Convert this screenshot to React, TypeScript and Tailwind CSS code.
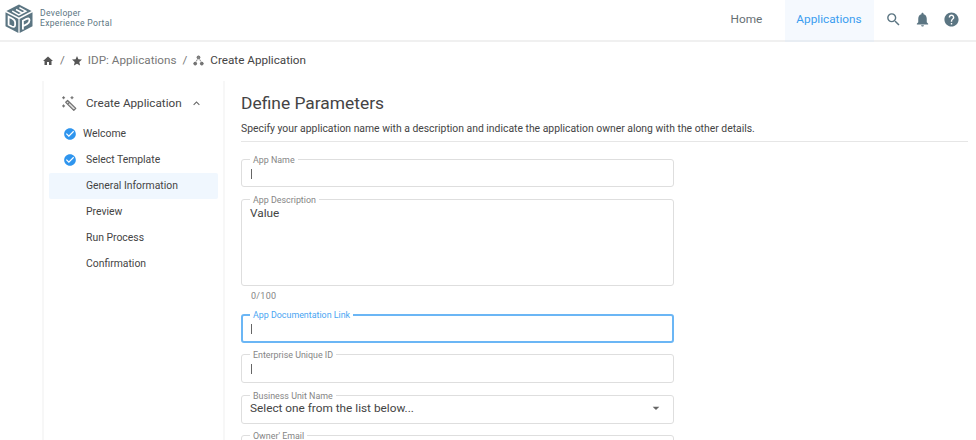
import React from "react";
import { MdHome, MdStar, MdSearch, MdNotifications, MdHelp, MdCheckCircle, MdExpandLess, MdArrowDropDown } from "react-icons/md";

function Logo() {
  return (
    <svg width="28" height="30" viewBox="0 0 28 30" className="shrink-0">
      <g fill="#5b7582">
        <path d="M14 .4 26.6 6.9 14 13.6 1.4 6.9Z" />
        <path d="M.5 8.3 13.4 15v13.9L.5 22.2Z" />
        <path d="M27.5 8.3 14.6 15v13.9l12.9-6.7Z" />
      </g>
      <g fill="none" stroke="#fff" strokeWidth="1.5">
        <path d="M7.2 7.2 13.8 10.8 20.8 7.2 14.4 3.6M17.3 9 11 5.5" />
        <path d="M3.6 12.7v8.1l3.2 1.7q3.3 1.3 3.3-1.7v-2.3q0-2.5-3-4Z" strokeWidth="1.8" />
        <path d="M17.9 25.4v-8.6l3.6-1.9q3-1.2 3 1.4 0 2.5-2.5 3.8l-4.1 2.1" strokeWidth="1.8" />
      </g>
    </svg>
  );
}

function Wand() {
  return (
    <svg width="17" height="17" viewBox="0 0 17 17" fill="#666">
      <path d="m6.6 5.5 8.2 7.9-2 2-8.1-8.1Z" fill="#ddd" stroke="#707070" strokeWidth="1.2" strokeLinejoin="round" />
      <path d="m6.8 9 1.9-1.9" stroke="#707070" strokeWidth="1.2" />
      <path d="m2.6 1.2.5 1 1 .5-1 .5-.5 1-.5-1-1-.5 1-.5ZM11 1.2l.5 1 1 .5-1 .5-.5 1-.5-1-1-.5 1-.5ZM2.6 9.4l.5 1 1 .5-1 .5-.5 1-.5-1-1-.5 1-.5Z" stroke="#666" strokeWidth=".4" />
    </svg>
  );
}

function Nodes() {
  return (
    <svg width="11" height="11" viewBox="0 0 11 11" fill="#666" stroke="#666">
      <circle cx="5.5" cy="2.4" r="1.4" fill="#888" />
      <circle cx="2.2" cy="8.6" r="1.4" fill="#777" />
      <circle cx="8.8" cy="8.6" r="1.4" fill="#777" />
      <path d="M4.3 4.4 3.3 6.4M6.7 4.4l1 2" strokeWidth=".8" />
    </svg>
  );
}

type FieldProps = { label: string; box: string; focused?: boolean; children?: React.ReactNode };

function Field({ label, box, focused, children }: FieldProps) {
  return (
    <fieldset className={`w-[433px] min-w-0 rounded-[3px] ${box} ${focused ? "border-2 border-[#6bb6f5] px-[7px]" : "border border-[#dedede] px-[8px]"}`}>
      <legend className={`h-[11px] px-[3px] text-[8.9px] leading-[12px] ${focused ? "text-[#4aa5f2]" : "text-[#858585]"}`}>{label}</legend>
      {children}
    </fieldset>
  );
}

const Caret = () => <div className="ml-[1px] mt-[4px] h-[10px] w-px bg-[#666]" />;

const steps = [
  { name: "Welcome", done: true, pad: "pl-[6px]" },
  { name: "Select Template", done: true, pad: "pl-[9px]" },
  { name: "General Information", active: true, pad: "pl-[9px]" },
  { name: "Preview", pad: "pl-[9px]" },
  { name: "Run Process", pad: "pl-[9px]" },
  { name: "Confirmation", pad: "pl-[9px]" },
];

export default function App() {
  return (
    <div className="h-[440px] w-[976px] overflow-hidden bg-white font-['Roboto',sans-serif] text-[#444]">
      <header className="flex h-[42px] border-b-2 border-[#f0f0f0] pl-[5px] text-[#5b7582]">
        <div className="flex flex-1 pt-[4px]">
          <Logo />
          <div className="pl-[7px] pt-[4px] text-[8.6px] leading-[10px] tracking-[0.3px]">
            Developer<br />Experience Portal
          </div>
        </div>
        <nav className="flex text-[11.8px] leading-[39px]">
          <a className="w-[55px] pl-px text-[#666f74]">Home</a>
          <a className="-mb-[2px] w-[89px] border-b-2 border-[#e8edf3] bg-[#f5f9fe] text-center text-[#3a9df0]">Applications</a>
        </nav>
        <div className="flex items-center gap-[12px] pb-px pl-[11px] pr-[16.5px]">
          <MdSearch size={17} />
          <MdNotifications size={17} />
          <MdHelp size={17} />
        </div>
      </header>

      <div className="flex h-[39px] items-center pb-[2px] pl-[42px] text-[11.7px] text-[#777]">
        <MdHome size={12} className="text-[#555]" />
        <span className="pl-[6px]">/</span>
        <MdStar size={12} className="ml-[6px] text-[#555]" />
        <span className="pl-[5px]">IDP: Applications</span>
        <span className="pl-[6px] pr-[6px]">/</span>
        <Nodes />
        <span className="pl-[6px] text-[#444]">Create Application</span>
      </div>

      <main className="flex">
        <aside className="ml-[42px] h-[360px] w-[183px] shrink-0 border-x-2 border-[#f7f7f7] px-[5px]">
          <div className="flex h-[40px] items-center pl-[12px] pt-[5px]">
            <Wand />
            <span className="pl-[8px] text-[11.7px]">Create Application</span>
            <MdExpandLess size={13} className="ml-[8px] text-[#666]" />
          </div>
          <ul className="text-[10.4px]">
            {steps.map((s) => (
              <li key={s.name} className={`flex h-[26px] items-center rounded-[2px] pl-[14px] ${s.active ? "bg-[#f0f7fe]" : ""}`}>
                <span className="w-[14px]">{s.done && <MdCheckCircle size={14} className="text-[#2f95ee]" />}</span>
                <span className={s.pad}>{s.name}</span>
              </li>
            ))}
          </ul>
        </aside>

        <section className="w-[735px] pl-[16px]">
          <div className="h-[61px] w-[727px] border-b border-[#e6e6e6]">
            <h1 className="pt-[10px] text-[17.4px] leading-[24px]">Define Parameters</h1>
            <p className="whitespace-nowrap pt-[7px] text-[10.38px] leading-[14px]">
              Specify your application name with a description and indicate the application owner along with the other details.
            </p>
          </div>
          <div className="flex flex-col pt-[12px] text-[11.8px] leading-[16px]">
            <Field label="App Name" box="h-[33px]"><Caret /></Field>
            <Field label="App Description" box="mt-[7px] h-[92px]">Value</Field>
            <div className="h-[23px] pl-[10px] pt-[4px] text-[9px] leading-[12px] tracking-[0.3px] text-[#858585]">0/100</div>
            <Field label="App Documentation Link" box="h-[34px]" focused><Caret /></Field>
            <Field label="Enterprise Unique ID" box="mt-[6px] h-[34px]"><Caret /></Field>
            <Field label="Business Unit Name" box="mt-[6.5px] h-[34px]">
              <div className="-mt-px flex items-center justify-between pr-[1px]">
                <span>Select one from the list below...</span>
                <MdArrowDropDown size={16} className="text-[#666]" />
              </div>
            </Field>
            <Field label="Owner' Email" box="mt-[6px] h-[34px]" />
          </div>
        </section>
      </main>
    </div>
  );
}
